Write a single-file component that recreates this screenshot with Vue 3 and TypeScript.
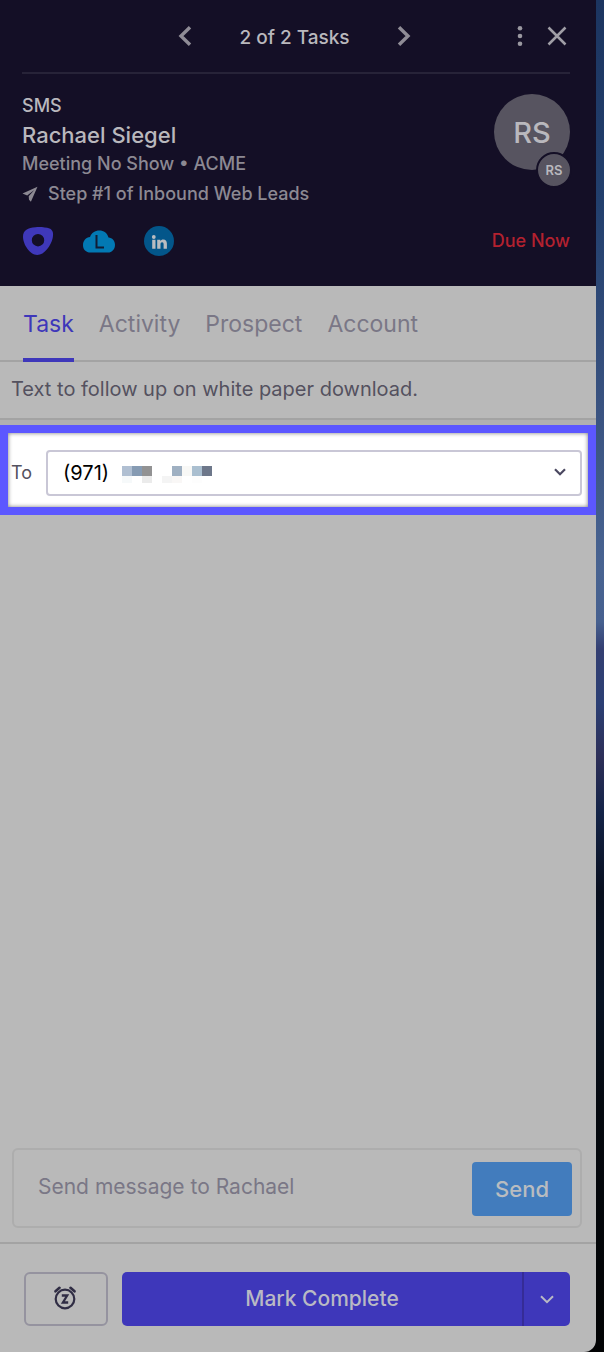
<script setup lang="ts">
import { ref } from 'vue'

interface Block {
  x: number
  y: number
  h: number
  fill: string
}

const tabs: string[] = ['Task', 'Activity', 'Prospect', 'Account']
const activeTab = ref<string>('Task')
const message = ref<string>('')
const phone = ref<string>('(971)')

const maskBlocks: Block[] = [
  { x: 0, y: 0, h: 10, fill: '#b0bfd2' },
  { x: 10, y: 0, h: 10, fill: '#869bb3' },
  { x: 20, y: 0, h: 10, fill: '#929293' },
  { x: 50, y: 0, h: 10, fill: '#9fb0c2' },
  { x: 60, y: 0, h: 10, fill: '#f8f8f6' },
  { x: 70, y: 0, h: 10, fill: '#aabfd0' },
  { x: 80, y: 0, h: 10, fill: '#6d778a' },
  { x: 0, y: 10, h: 7, fill: '#f6f9fa' },
  { x: 20, y: 10, h: 7, fill: '#ebebeb' },
  { x: 40, y: 10, h: 7, fill: '#f4f4f4' },
  { x: 50, y: 10, h: 7, fill: '#f9f7f6' },
  { x: 70, y: 10, h: 7, fill: '#fdfdfd' },
]
</script>

<template>
  <div class="desktop">
    <main class="panel">
      <header class="head">
        <nav class="pager" aria-label="Tasks">
          <span class="pager-side"></span>
          <div class="pager-mid">
            <button type="button" aria-label="Previous task">
              <svg width="14" height="20" viewBox="0 0 14 20"><path d="M12 1.200 3 10l9 8.800" fill="none" stroke="#8f8c96" stroke-width="3.400" /></svg>
            </button>
            <h1 class="count">2 of 2 Tasks</h1>
            <button type="button" aria-label="Next task">
              <svg width="14" height="20" viewBox="0 0 14 20"><path d="M2 1.200 11 10l-9 8.800" fill="none" stroke="#8f8c96" stroke-width="3.400" /></svg>
            </button>
          </div>
          <div class="pager-side pager-end">
            <button type="button" aria-label="More options">
              <svg width="6" height="20" viewBox="0 0 6 20" fill="#9a98a0"><circle cx="3" cy="2.300" r="2.300" /><circle cx="3" cy="10" r="2.300" /><circle cx="3" cy="17.700" r="2.300" /></svg>
            </button>
            <button type="button" aria-label="Close">
              <svg width="20" height="20" viewBox="0 0 20 20"><path d="M1.500 1.500l17 17M18.500 1.500l-17 17" fill="none" stroke="#a09ea6" stroke-width="2.500" /></svg>
            </button>
          </div>
        </nav>

        <div class="person">
          <div class="info">
            <p class="kind">SMS</p>
            <h2 class="name">Rachael Siegel</h2>
            <p class="sub">Meeting No Show • ACME</p>
            <p class="step">
              <svg width="16" height="16" viewBox="0 0 16 16" fill="#8c8993"><path d="M15.500.8.500 7.600l4.700 2L12.300 4 6.700 10.200l.3 3.500 1.900 2z" /></svg>
              <span>Step #1 of Inbound Web Leads</span>
            </p>
          </div>
          <div class="avatar">RS<span class="badge">RS</span></div>
        </div>

        <div class="links">
          <a href="#" aria-label="Outreach">
            <svg width="32" height="30" viewBox="0 0 32 30"><path fill="#3f38ba" fill-rule="evenodd" d="M13.500 1.200C18.500.8 24 1.300 27.500 2.600 31 4 31.700 7.500 30.700 12 29 19.500 22.500 29 15.200 29 8 29 1 18.500 1 10.800 1 4 6 1.800 13.500 1.200zM16 8a6.200 6.200 0 1 0 .01 12.400A6.200 6.200 0 0 0 16 8z" /></svg>
          </a>
          <a href="#" aria-label="Lead in Salesforce">
            <svg width="32" height="23" viewBox="0 0 32 23"><path fill="#0279b3" d="M7.500 22.500C3 22.500 0 19.500 0 15.200 0 10.500 3 7.500 7 7 8.500 2.800 12 .5 16.300.5c4.500 0 8 2.600 9.200 7 3.800.2 6.500 3.200 6.500 7.200 0 4.600-3 7.800-7 7.800z" /><path d="M13.500 5v12.500h7.500" fill="none" stroke="#111d35" stroke-width="2" /></svg>
          </a>
          <a href="#" aria-label="LinkedIn">
            <svg width="30" height="30" viewBox="0 0 30 30"><circle cx="15" cy="15" r="15" fill="#03568a" /><g fill="#b9bcc0"><circle cx="9.800" cy="11" r="1.900" /><path d="M8.200 13.700h3.300v9.100H8.200zM13.200 13.700h3.100v1.300c.6-.9 1.600-1.500 2.900-1.500 2.700 0 3.700 1.700 3.700 4.300v5h-3.300v-4.500c0-1.200-.4-2-1.500-2s-1.600.8-1.600 2v4.500h-3.300z" /></g></svg>
          </a>
          <span class="due">Due Now</span>
        </div>
      </header>

      <div class="tabs" role="tablist">
        <button
          v-for="tab in tabs"
          :key="tab"
          type="button"
          role="tab"
          class="tab"
          :class="{ active: tab === activeTab }"
          :aria-selected="tab === activeTab"
          @click="activeTab = tab"
        >{{ tab }}</button>
      </div>

      <p class="note">Text to follow up on white paper download.</p>

      <section class="recipient">
        <label for="to" class="to-label">To</label>
        <div class="select-wrap">
          <select id="to" v-model="phone" class="select">
            <option>(971)</option>
          </select>
          <svg class="mask" width="90" height="17" viewBox="0 0 90 17" aria-hidden="true" shape-rendering="crispEdges">
            <rect v-for="(b, i) in maskBlocks" :key="i" :x="b.x" :y="b.y" width="10" :height="b.h" :fill="b.fill" />
          </svg>
          <svg class="caret" width="12" height="8" viewBox="0 0 12 8" aria-hidden="true"><path d="M1 1.200l5 5 5-5" fill="none" stroke="#4b4860" stroke-width="2.200" /></svg>
        </div>
      </section>

      <form class="composer" @submit.prevent>
        <input v-model="message" class="message" type="text" aria-label="Message" placeholder="Send message to Rachael" />
        <button class="send" type="submit">Send</button>
      </form>

      <footer class="foot">
        <button class="snooze" type="button" aria-label="Snooze">
          <svg width="22" height="24" viewBox="0 0 22 24" fill="none" stroke="#302d44"><circle cx="11" cy="13" r="9.300" stroke-width="2.200" /><path d="M1.500 5.300l4-3.500M20.500 5.300l-4-3.500" stroke-width="2.600" stroke-linecap="round" /><path d="M7.800 9.500h5.400l-4.300 7h5.300" stroke-width="2.300" /></svg>
        </button>
        <div class="split">
          <button class="complete" type="button">Mark Complete</button>
          <button class="more" type="button" aria-label="More completion options">
            <svg width="14" height="9" viewBox="0 0 14 9"><path d="M1 1.200l6 6 6-6" fill="none" stroke="#b9b9c4" stroke-width="2" /></svg>
          </button>
        </div>
      </footer>
    </main>
  </div>
</template>

<style>
body {
  margin: 0;
}
</style>

<style scoped>
.desktop {
  display: flex;
  box-sizing: border-box;
  min-height: 100vh;
  padding-right: 8px;
  background: linear-gradient(#1c3560 0%, #223f6d 15%, #395280 30%, #486391 42%, #46608f 46%, #343f72 48%, #2b3f74 52%, #2d2f58 56%, #142448 60%, #080f1e 66%, #071222 74%, #05090f 82%, #020304 100%);
  font-family: Inter, "Liberation Sans", sans-serif;
  color: #54515f;
}

.desktop * {
  box-sizing: border-box;
}

.panel {
  display: flex;
  flex: 1;
  flex-direction: column;
  min-width: 0;
  overflow: hidden;
  background: #b9b9b9;
  border-bottom-right-radius: 12px;
}

h1,
h2,
p {
  margin: 0;
  font-weight: 400;
}

button {
  padding: 0;
  border: 0;
  background: none;
  color: inherit;
  font: inherit;
  cursor: pointer;
}

svg {
  display: block;
}

.head {
  padding: 0 26px 29px 22px;
  background: #140f26;
  color: #b9b8bd;
}

.pager {
  display: flex;
  align-items: center;
  height: 74px;
  border-bottom: 2px solid #272338;
}

.pager-side {
  flex: 1;
}

.pager-end {
  display: flex;
  justify-content: flex-end;
  gap: 24px;
  padding-right: 3px;
}

.pager-mid {
  display: flex;
  align-items: center;
  gap: 47px;
}

.count {
  padding-top: 3px;
  font-size: 19px;
  font-weight: 500;
  line-height: 24px;
}

.person {
  display: flex;
  justify-content: space-between;
  padding-top: 20px;
}

.kind {
  font-size: 18px;
  font-weight: 500;
  line-height: 24px;
}

.name {
  font-size: 22px;
  font-weight: 500;
  line-height: 34px;
}

.sub,
.step {
  color: #8c8993;
  font-size: 18px;
  font-weight: 500;
  line-height: 24px;
}

.step {
  display: flex;
  align-items: center;
  gap: 10px;
  padding-top: 6px;
}

.avatar {
  position: relative;
  width: 76px;
  height: 76px;
  border-radius: 50%;
  background: #575460;
  font-size: 29px;
  font-weight: 500;
  line-height: 78px;
  text-align: center;
}

.badge {
  position: absolute;
  right: -2px;
  bottom: -18px;
  width: 36px;
  height: 36px;
  border: 2px solid #140f26;
  border-radius: 50%;
  background: #575460;
  font-size: 13px;
  font-weight: 600;
  line-height: 32px;
}

.links {
  display: flex;
  align-items: center;
  gap: 29px;
  height: 32px;
  margin-top: 19px;
}

.due {
  margin-left: auto;
  color: #b3212f;
  font-size: 18px;
  font-weight: 500;
  line-height: 24px;
}

.tabs {
  display: flex;
  gap: 25px;
  height: 76px;
  padding-left: 23px;
  border-bottom: 2px solid #a3a3a3;
}

.tab {
  height: 76px;
  padding-top: 4px;
  border-bottom: 4px solid transparent;
  color: #7a7786;
  font-size: 23px;
}

.tab.active {
  border-bottom-color: #3e37ba;
  color: #3e37ba;
}

.note {
  padding: 13px 11px 15px;
  border-bottom: 2px solid #a3a3a3;
  font-size: 20px;
  line-height: 28px;
}

.recipient {
  display: flex;
  align-items: center;
  gap: 14px;
  margin-top: 5px;
  padding: 17px 6px 11px 3px;
  border: 8px solid #5c57ff;
  background: #fff;
  box-shadow: inset 0 0 4px #777, 0 -5px 0 #b0b0b0;
}

.to-label {
  font-size: 18px;
  line-height: 24px;
}

.select-wrap {
  position: relative;
  flex: 1;
}

.select {
  display: block;
  width: 100%;
  height: 46px;
  padding: 0 40px 0 15px;
  border: 2px solid #c9c7d6;
  border-radius: 4px;
  appearance: none;
  background: #fff;
  color: #000;
  font: inherit;
  font-size: 20px;
}

.mask {
  position: absolute;
  top: 16px;
  left: 76px;
  pointer-events: none;
}

.caret {
  position: absolute;
  top: 18px;
  right: 16px;
  pointer-events: none;
}

.composer {
  display: flex;
  align-items: flex-start;
  height: 80px;
  margin: auto 14px 14px 12px;
  padding: 12px 8px 0 24px;
  border: 2px solid #adadad;
  border-radius: 6px;
}

.message {
  flex: 1;
  min-width: 0;
  height: 48px;
  padding: 0;
  border: 0;
  outline: 0;
  background: none;
  color: #54515f;
  font: inherit;
  font-size: 21px;
}

.message::placeholder {
  color: #7a7786;
  opacity: 1;
}

.send {
  width: 100px;
  height: 54px;
  border-radius: 4px;
  background: #427cbd;
  color: #b9bcc0;
  font-size: 22px;
  font-weight: 500;
}

.foot {
  display: flex;
  gap: 14px;
  padding: 28px 26px 26px 24px;
  border-top: 2px solid #a3a3a3;
}

.snooze {
  display: grid;
  place-items: center;
  width: 84px;
  height: 54px;
  padding: 0 2px 2px 0;
  border: 2px solid #95939f;
  border-radius: 6px;
}

.split {
  display: flex;
  flex: 1;
  height: 54px;
  overflow: hidden;
  border-radius: 5px;
  background: #3e37ba;
  color: #b9b9c4;
}

.complete {
  flex: 1;
  padding-bottom: 2px;
  font-size: 21px;
  font-weight: 500;
}

.more {
  display: grid;
  place-items: center;
  width: 48px;
  border-left: 2px solid #352c96;
}
</style>
